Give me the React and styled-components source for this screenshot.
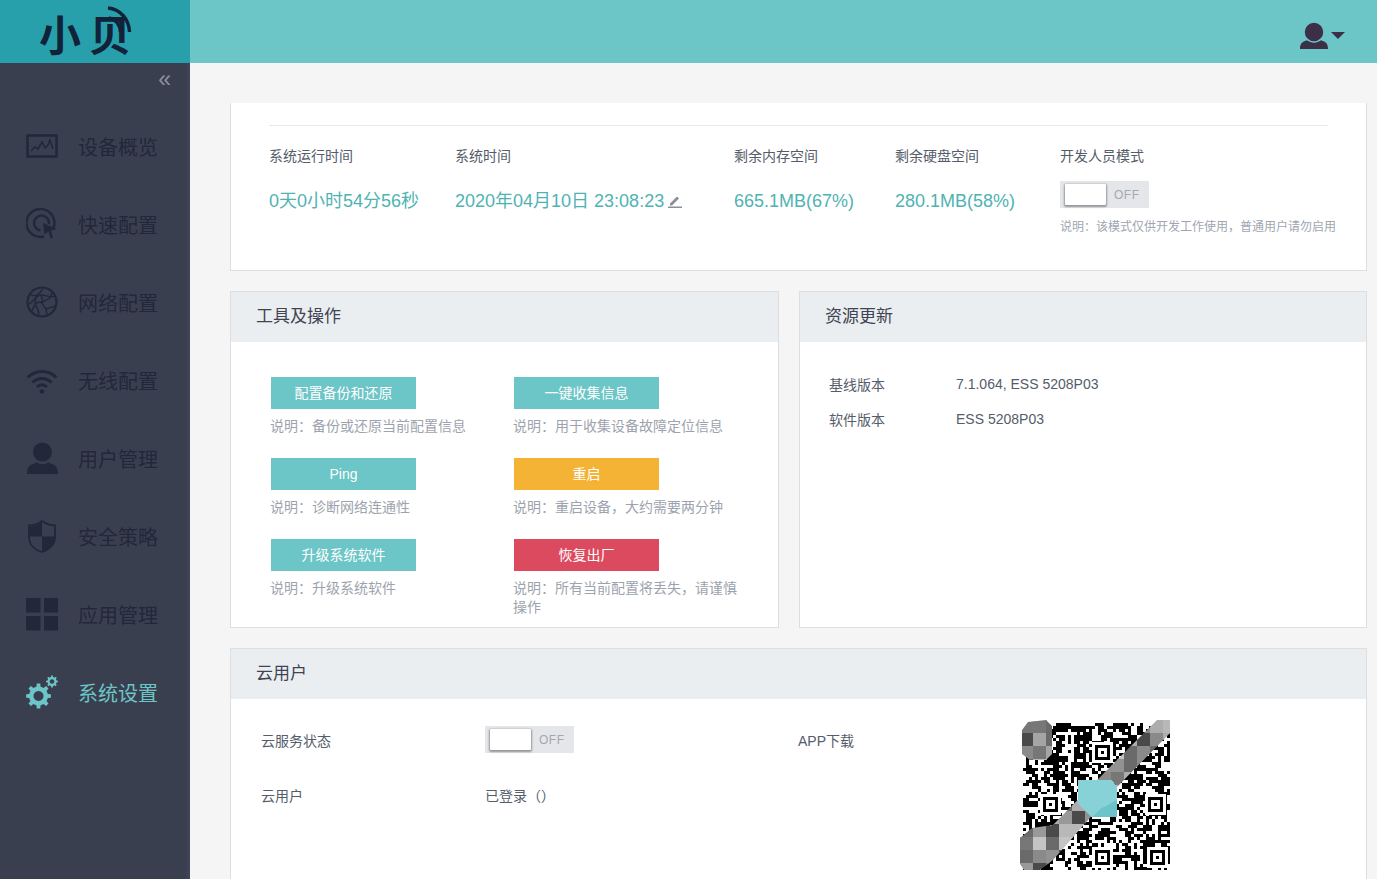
import React from 'react';
import styled, { createGlobalStyle } from 'styled-components';

const Global = createGlobalStyle`
  html, body { margin: 0; padding: 0; height: 100%; overflow: hidden; }
  body { font-family: "Liberation Sans", "Noto Sans CJK SC", sans-serif; color: #555c6a; background: #f5f5f5; }
  * { box-sizing: border-box; }
`;

const Shell = styled.div`display: flex; flex-direction: column; width: 1377px; height: 879px; overflow: hidden;`;
const Header = styled.header`display: flex; align-items: center; justify-content: space-between; height: 63px; flex: none; background: #6cc5c6;`;
const Logo = styled.div`
  position: relative; width: 190px; height: 63px; padding-left: 39px; background: #27a0ab;
  color: #122238; font-size: 42px; line-height: 66px; font-weight: 700; letter-spacing: 8px;
  font-family: "Noto Sans CJK SC", sans-serif; overflow: hidden;
`;
const LogoArcs = styled.svg`position: absolute; left: 100px; top: 0;`;
const UserMenu = styled.div`display: flex; align-items: center; gap: 3px; margin-right: 32px; margin-top: 8px;`;
const Body = styled.div`display: flex; flex: 1; min-height: 0;`;
const Sidebar = styled.aside`width: 190px; flex: none; background: #3a3f50; border-right: 3px solid #3f4356;`;
const Collapse = styled.div`
  height: 44px; padding: 1px 16px 0 0; text-align: right; color: #8d919e; font-size: 23px; line-height: 30px;
`;
const NavItem = styled.div`
  display: flex; align-items: center; height: 78px; padding-left: 26px; gap: 20px;
  font-size: 20px; color: ${p => (p.$active ? '#6cc5c6' : '#222739')};
`;
const IconBox = styled.svg`width: 32px; height: 34px; flex: none;`;

const Main = styled.main`flex: 1; min-width: 0; padding: 40px 10px 0 40px; display: flex; flex-direction: column; gap: 20px;`;
const StatusCard = styled.section`
  height: 168px; flex: none; background: #fff; border: 1px solid #dcdee0; border-top: 0; padding: 22px 38px 0;
`;
const Divider = styled.div`height: 1px; background: #e6e8ea; width: 1059px;`;
const Stats = styled.div`display: grid; grid-template-columns: 186px 279px 161px 165px 1fr; margin-top: 20px;`;
const StatLabel = styled.div`font-size: 14px; line-height: 20px; color: #555c6a;`;
const StatValue = styled.div`
  margin-top: 23px; font-size: 18px; line-height: 24px; color: #4fb3b3; white-space: nowrap; display: flex; align-items: center; gap: 4px;
`;
const DevCol = styled.div`white-space: nowrap;`;
const Toggle = styled.div`
  display: flex; align-items: center; width: 89px; height: 27px; background: #e4e6ea; padding-left: 5px;
  ${p => p.$mt ? `margin-top: ${p.$mt}px;` : ''}
`;
const Knob = styled.div`width: 41px; height: 21px; background: #fff; border-radius: 1px; box-shadow: 0 1px 2px 1px rgba(0,0,0,.35);`;
const OffText = styled.span`margin-left: 8px; font-size: 12px; color: #a4a8b0; letter-spacing: .5px;`;
const Hint = styled.div`font-size: 12px; line-height: 16px; color: #a0a6b1; margin-top: 11px;`;

const PanelRow = styled.div`display: flex; gap: 20px; height: 337px; flex: none;`;
const Panel = styled.section`
  flex: ${p => p.$grow || 'none'}; width: ${p => p.$w || 'auto'}; background: #fff; border: 1px solid #dcdee0; overflow: hidden;
`;
const PanelHead = styled.h2`
  margin: 0; height: 50px; padding: 0 0 0 25px; background: #ebeef0; font-weight: 400; font-size: 17px; line-height: 49px; color: #3f4452;
`;
const ToolGrid = styled.div`display: grid; grid-template-columns: 243px 1fr; grid-auto-rows: 81px; padding: 35px 0 0 39px;`;
const ToolBtn = styled.div`
  width: 145px; height: 32px; margin-left: 1px; color: #fff; font-size: 14px; line-height: 32px; text-align: center; background: ${p => p.$bg || '#6cc5c6'};
`;
const ToolHint = styled.div`font-size: 14px; line-height: 19.5px; margin-top: 7.5px; color: #9da3ae; width: 232px;`;
const InfoList = styled.dl`margin: 0; padding: 24px 0 0 29px;`;
const InfoRow = styled.div`display: flex; height: 35px; align-items: center; font-size: 14px; color: #555c6a;`;
const InfoKey = styled.dt`width: 127px;`;
const InfoVal = styled.dd`margin: 0;`;

const CloudBody = styled.div`display: grid; grid-template-columns: 537px 1fr; padding: 21px 0 0 30px;`;
const CloudCol = styled.div`padding-top: 6px;`;
const CloudRow = styled.div`display: flex; align-items: center; height: 27px; margin-bottom: 28px; font-size: 14px; color: #555c6a;`;
const CloudKey = styled.div`width: 224px; flex: none;`;
const AppCol = styled.div`display: flex; align-items: flex-start; font-size: 14px; color: #555c6a;`;
const AppKey = styled.div`width: 222px; flex: none; margin-top: 10px;`;
const CloudPanel = styled(Panel)`height: 260px; flex: none;`;
const QrSvg = styled.svg`display: block; width: 150px; height: 150px;`;

const Icons = {
  monitor: <>
    <rect x="1.5" y="6.5" width="29" height="21" fill="none" stroke="currentColor" strokeWidth="2.5" />
    <path d="M5 22l4-4 3 2 4-7 3 6 3-3 2-5 3 9" fill="none" stroke="currentColor" strokeWidth="1.6" />
  </>,
  target: <>
    <path d="M27.5 21A14 14 0 1 0 18 29.5" fill="none" stroke="currentColor" strokeWidth="2.4" />
    <path d="M23 17A7.5 7.5 0 1 0 14.5 23.5" fill="none" stroke="currentColor" strokeWidth="2.4" />
    <path d="M17 16l14 6-6 1.5 2 7-2.5 1-2-7-4 3z" fill="currentColor" />
  </>,
  globe: <>
    <circle cx="16" cy="17" r="14.5" fill="none" stroke="currentColor" strokeWidth="2.2" />
    <path d="M5 10c5 2 8-1 12-6M3 19c4-2 7-9 12-9s9 3 14 1M6 26c2-6 4-9 9-9l5 7 1 6M15 10l2 7-2 0M20 24l9-3M17 17l8-5 1-5M10 11l-1 8 3 6 1 5" fill="none" stroke="currentColor" strokeWidth="1.4" />
  </>,
  wifi: <>
    <path d="M1.5 14.5C10 6.5 22 6.5 30.5 14.500" fill="none" stroke="currentColor" strokeWidth="3" />
    <path d="M6.500 19.500C12 14 20 14 25.500 19.500" fill="none" stroke="currentColor" strokeWidth="3" />
    <path d="M11 24c3-3 7-3 10 0" fill="none" stroke="currentColor" strokeWidth="3" />
    <circle cx="16" cy="28.500" r="2.300" fill="currentColor" />
  </>,
  user: <>
    <circle cx="16.500" cy="11" r="9.500" fill="currentColor" />
    <path d="M1 33c0-6 2-9 6-10 2-.5 3-1.500 3.500-2 3 3 9 3 12 0 .5.5 1.500 1.500 3.500 2 4 1 6 4 6 10z" fill="currentColor" />
  </>,
  shield: <>
    <path d="M16 2C11 5.500 7 6.500 3 6.500V18c0 8 6 13 13 15 7-2 13-7 13-15V6.500C25 6.500 21 5.500 16 2z" fill="none" stroke="currentColor" strokeWidth="1.800" />
    <path d="M16 3C11 6.500 7 7.500 3.500 7.500V17.500H16zM16 17.500V32.500c7-2 12.500-7 12.500-15z" fill="currentColor" />
  </>,
  grid: <>
    <rect x="0" y="1" width="14.500" height="14.500" fill="currentColor" />
    <rect x="18" y="1" width="14" height="14.500" fill="currentColor" />
    <rect x="0" y="19" width="14.500" height="14.500" fill="currentColor" />
    <rect x="18" y="19" width="14" height="14.500" fill="currentColor" />
  </>,
};

function gearPath(cx, cy, rOut, rIn, teeth) {
  let d = '';
  const step = (Math.PI * 2) / teeth;
  for (let i = 0; i < teeth; i++) {
    const a = i * step;
    const pts = [[rIn, a - step * 0.5], [rIn, a - step * 0.28], [rOut, a - step * 0.18], [rOut, a + step * 0.18], [rIn, a + step * 0.28]];
    pts.forEach(([r, t], k) => {
      d += `${i === 0 && k === 0 ? 'M' : 'L'}${(cx + r * Math.cos(t)).toFixed(2)} ${(cy + r * Math.sin(t)).toFixed(2)}`;
    });
  }
  return d + 'Z';
}

const GearIcon = () => (
  <IconBox viewBox="0 0 32 34" style={{ color: '#6cc5c6' }}>
    <path fillRule="evenodd" fill="currentColor" d={`${gearPath(12.5, 21, 12.5, 9.500, 8)}M12.500 16a5 5 0 1 0 .01 0z`} />
    <path fillRule="evenodd" fill="currentColor" d={`${gearPath(26, 6.500, 6, 4.500, 8)}M26 4.200a2.300 2.300 0 1 0 .01 0z`} />
  </IconBox>
);

const nav = [
  ['设备概览', 'monitor'], ['快速配置', 'target'], ['网络配置', 'globe'], ['无线配置', 'wifi'],
  ['用户管理', 'user'], ['安全策略', 'shield'], ['应用管理', 'grid'],
];

const tools = [
  ['配置备份和还原', '说明：备份或还原当前配置信息'],
  ['一键收集信息', '说明：用于收集设备故障定位信息'],
  ['Ping', '说明：诊断网络连通性'],
  ['重启', '说明：重启设备，大约需要两分钟', '#f5b335'],
  ['升级系统软件', '说明：升级系统软件'],
  ['恢复出厂', '说明：所有当前配置将丢失，请谨慎操作', '#dc4a60'],
];

function rng(seed) {
  let s = seed;
  return () => { s = (s * 1664525 + 1013904223) >>> 0; return (s >>> 8) / 16777216; };
}

const SHADES = ['#8a8a8a', '#a5a5a5', '#777777', '#999999', '#b8b8b8', '#6a6a6a', '#929292', '#adadad', '#4a4a4a', '#c4c4c4'];

function QrCode() {
  const r = rng(20200410);
  const cell = 3, n = 49, ox = 3, oy = 3;
  const mods = [];
  const grid = [];
  for (let y = 0; y < n; y++) {
    grid[y] = [];
    for (let x = 0; x < n; x++) {
      const left = x > 0 ? grid[y][x - 1] : 0;
      const up = y > 0 ? grid[y - 1][x] : 0;
      const p = 0.42 + 0.14 * left + 0.14 * up;
      grid[y][x] = r() < p ? 1 : 0;
      if (grid[y][x]) mods.push(<rect key={`${x}-${y}`} x={ox + x * cell} y={oy + y * cell} width={cell} height={cell} fill="#000" />);
    }
  }
  const align = ([x, y]) => (
    <g key={`${x}-${y}`}>
      <rect x={x - 3} y={y - 3} width={21} height={21} fill="#fff" />
      <rect x={x} y={y} width={15} height={15} fill="#000" />
      <rect x={x + 3} y={y + 3} width={9} height={9} fill="#fff" />
      <rect x={x + 6} y={y + 6} width={3} height={3} fill="#000" />
    </g>
  );
  const g = rng(77);
  const blocks = [];
  for (let j = 0; j < 12; j++) {
    for (let i = 0; i < 12; i++) {
      blocks.push(<rect key={`${i}-${j}`} x={i * 13} y={j * 13} width={13.5} height={13.5} fill={SHADES[Math.floor(g() * SHADES.length)]} />);
    }
  }
  return (
    <QrSvg viewBox="0 0 150 150" shapeRendering="crispEdges">
      <defs>
        <clipPath id="qr-mosaic" clipRule="nonzero">
          <path d="M0 118L12 108L33 105L90 47L137 0H150V13L97 67L33 140L20 150H4L0 144Z" />
          <path d="M8 2L26 0L32 6V34L26 40H10L2 34V10Z" />
        </clipPath>
      </defs>
      <rect width="150" height="150" fill="#fff" />
      {mods}
      {[[75, 25], [23, 77], [128, 77], [75, 130], [130, 130]].map(align)}
      <g clipPath="url(#qr-mosaic)">{blocks}</g>
      <polygon points="58,60 92,60 97,68 97,97 72,97 58,84" fill="#86d2d6" />
      <polygon points="97,80 97,97 72,97 82,88" fill="#6cc3c9" />
    </QrSvg>
  );
}

const SwitchOff = ({ mt }) => (
  <Toggle $mt={mt}><Knob /><OffText>OFF</OffText></Toggle>
);

export default function App() {
  return (
    <Shell>
      <Global />
      <Header>
        <Logo>
          小贝
          <LogoArcs width="34" height="36" viewBox="0 0 34 36" fill="none" stroke="#122238" strokeWidth="3.4">
            <path d="M8 8C20 9 29 19 29.500 32" />
            <path d="M9 18C16 19 20 25 20.500 32" />
          </LogoArcs>
        </Logo>
        <UserMenu>
          <svg width="28" height="28" viewBox="0 0 28 28" fill="#3b3048">
            <path d="M0 27c0-5 2-7 5-8 2-.5 3-1 4-2h10c1 1 2 1.500 4 2 3 1 5 3 5 8z" />
            <circle cx="14" cy="10" r="10" stroke="#6cc5c6" strokeWidth="1.500" />
          </svg>
          <svg width="14" height="7" viewBox="0 0 14 7" fill="#3b3048"><path d="M0 0h14L7 7z" /></svg>
        </UserMenu>
      </Header>
      <Body>
        <Sidebar>
          <Collapse>«</Collapse>
          {nav.map(([label, icon]) => (
            <NavItem key={label}>
              <IconBox viewBox="0 0 32 34">{Icons[icon]}</IconBox>
              {label}
            </NavItem>
          ))}
          <NavItem $active><GearIcon />系统设置</NavItem>
        </Sidebar>
        <Main>
          <StatusCard>
            <Divider />
            <Stats>
              <div><StatLabel>系统运行时间</StatLabel><StatValue>0天0小时54分56秒</StatValue></div>
              <div>
                <StatLabel>系统时间</StatLabel>
                <StatValue>
                  2020年04月10日 23:08:23
                  <svg width="14" height="14" viewBox="0 0 14 14" fill="#8a8f99">
                    <path d="M2 9.500L9 2.500l2 2L4 11.500H2zM0 12.500h14V14H0z" />
                  </svg>
                </StatValue>
              </div>
              <div><StatLabel>剩余内存空间</StatLabel><StatValue>665.1MB(67%)</StatValue></div>
              <div><StatLabel>剩余硬盘空间</StatLabel><StatValue>280.1MB(58%)</StatValue></div>
              <DevCol>
                <StatLabel>开发人员模式</StatLabel>
                <SwitchOff mt={15} />
                <Hint>说明：该模式仅供开发工作使用，普通用户请勿启用</Hint>
              </DevCol>
            </Stats>
          </StatusCard>
          <PanelRow>
            <Panel $w="549px">
              <PanelHead>工具及操作</PanelHead>
              <ToolGrid>
                {tools.map(([name, hint, bg]) => (
                  <div key={name}>
                    <ToolBtn $bg={bg}>{name}</ToolBtn>
                    <ToolHint>{hint}</ToolHint>
                  </div>
                ))}
              </ToolGrid>
            </Panel>
            <Panel $grow="1">
              <PanelHead>资源更新</PanelHead>
              <InfoList>
                <InfoRow><InfoKey>基线版本</InfoKey><InfoVal>7.1.064, ESS 5208P03</InfoVal></InfoRow>
                <InfoRow><InfoKey>软件版本</InfoKey><InfoVal>ESS 5208P03</InfoVal></InfoRow>
              </InfoList>
            </Panel>
          </PanelRow>
          <CloudPanel>
            <PanelHead>云用户</PanelHead>
            <CloudBody>
              <CloudCol>
                <CloudRow><CloudKey>云服务状态</CloudKey><SwitchOff /></CloudRow>
                <CloudRow><CloudKey>云用户</CloudKey>已登录（）</CloudRow>
              </CloudCol>
              <AppCol><AppKey>APP下载</AppKey><QrCode /></AppCol>
            </CloudBody>
          </CloudPanel>
        </Main>
      </Body>
    </Shell>
  );
}
